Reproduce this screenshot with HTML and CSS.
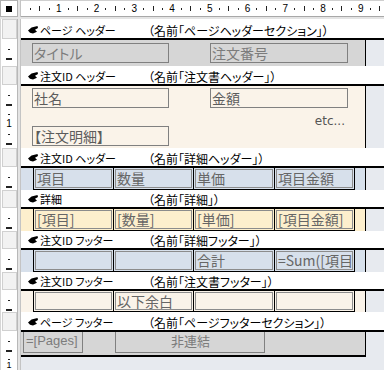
FILE: index.html
```html
<!DOCTYPE html>
<html lang="ja">
<head>
    <meta charset="UTF-8">
    <title>レポート デザイン ビュー</title>
    <link rel="stylesheet" href="styles.css">
</head>
<body>
    <!-- ルーラー -->
    <div class="row top">
        <div class="corner"><span class="corner-mark"></span></div>
        <div class="gap"></div>
        <div class="hruler">
            <i class="d"></i><i class="t"></i><i class="d"></i><i class="n">1</i>
            <i class="d"></i><i class="t"></i><i class="d"></i><i class="n">2</i>
            <i class="d"></i><i class="t"></i><i class="d"></i><i class="n">3</i>
            <i class="d"></i><i class="t"></i><i class="d"></i><i class="n">4</i>
            <i class="d"></i><i class="t"></i><i class="d"></i><i class="n">5</i>
            <i class="d"></i><i class="t"></i><i class="d"></i><i class="n">6</i>
            <i class="d"></i><i class="t"></i><i class="d"></i><i class="n">7</i>
            <i class="d"></i><i class="t"></i><i class="d"></i><i class="n">8</i>
            <i class="d"></i><i class="t"></i><i class="d"></i><i class="n">9</i>
            <i class="d"></i><i class="t"></i>
        </div>
    </div>
    <div class="strip"></div>

    <!-- ページ ヘッダー -->
    <div class="row bar-row h19">
        <div class="selcell"><span class="selbox"></span></div>
        <div class="gap"></div>
        <div class="bar">
            <svg class="bar-icon" width="10" height="8" viewBox="0 0 10 8"><path d="M0 4.5 L3.5 1.5 L9.5 0 L10 2 L7 3.8 L9 5.8 L5 7.5 L2 6.8 Z"/></svg>
            <span class="bar-label">ページ ヘッダー</span>
            <span class="bar-name">（名前「ページヘッダーセクション」）</span>
        </div>
    </div>
    <div class="row">
        <div class="vr"><i class="d"></i><i class="l"></i></div>
        <div class="gap"></div>
        <div class="sec sec-page h26">
            <div class="boxes">
                <div class="tb wide">タイトル</div>
                <div class="tb wide2">注文番号</div>
            </div>
        </div>
    </div>

    <!-- 注文書ヘッダー -->
    <div class="row bar-row h18">
        <div class="selcell"><span class="selbox"></span></div>
        <div class="gap"></div>
        <div class="bar">
            <svg class="bar-icon" width="10" height="8" viewBox="0 0 10 8"><path d="M0 4.5 L3.5 1.5 L9.5 0 L10 2 L7 3.8 L9 5.8 L5 7.5 L2 6.8 Z"/></svg>
            <span class="bar-label">注文ID ヘッダー</span>
            <span class="bar-name">（名前「注文書ヘッダー」）</span>
        </div>
    </div>
    <div class="row">
        <div class="vr"><i class="d"></i><i class="l"></i><i class="d"></i><i class="n">1</i><i class="d"></i><i class="l"></i></div>
        <div class="gap"></div>
        <div class="sec sec-order h62">
            <div class="boxes">
                <div class="tb wide dark">社名</div>
                <div class="tb wide2 dark">金額</div>
            </div>
            <div class="etc">etc...</div>
            <div class="boxes">
                <div class="tb wide dark">【注文明細】</div>
            </div>
        </div>
    </div>

    <!-- 詳細ヘッダー -->
    <div class="row bar-row h18">
        <div class="selcell"><span class="selbox"></span></div>
        <div class="gap"></div>
        <div class="bar">
            <svg class="bar-icon" width="10" height="8" viewBox="0 0 10 8"><path d="M0 4.5 L3.5 1.5 L9.5 0 L10 2 L7 3.8 L9 5.8 L5 7.5 L2 6.8 Z"/></svg>
            <span class="bar-label">注文ID ヘッダー</span>
            <span class="bar-name">（名前「詳細ヘッダー」）</span>
        </div>
    </div>
    <div class="row">
        <div class="vr"><i class="d"></i><i class="l"></i></div>
        <div class="gap"></div>
        <div class="sec sec-group h22">
            <div class="cells">
                <div class="cell"><span>項目</span></div>
                <div class="cell"><span>数量</span></div>
                <div class="cell"><span>単価</span></div>
                <div class="cell"><span>項目金額</span></div>
            </div>
        </div>
    </div>

    <!-- 詳細 -->
    <div class="row bar-row h17">
        <div class="selcell"><span class="selbox"></span></div>
        <div class="gap"></div>
        <div class="bar">
            <svg class="bar-icon" width="10" height="8" viewBox="0 0 10 8"><path d="M0 4.5 L3.5 1.5 L9.5 0 L10 2 L7 3.8 L9 5.8 L5 7.5 L2 6.8 Z"/></svg>
            <span class="bar-label">詳細</span>
            <span class="bar-name">（名前「詳細」）</span>
        </div>
    </div>
    <div class="row">
        <div class="vr"><i class="d"></i><i class="l"></i></div>
        <div class="gap"></div>
        <div class="sec sec-detail h22">
            <div class="cells">
                <div class="cell"><span>[項目]</span></div>
                <div class="cell"><span>[数量]</span></div>
                <div class="cell"><span>[単価]</span></div>
                <div class="cell"><span>[項目金額]</span></div>
            </div>
        </div>
    </div>

    <!-- 詳細フッター -->
    <div class="row bar-row h17">
        <div class="selcell"><span class="selbox"></span></div>
        <div class="gap"></div>
        <div class="bar">
            <svg class="bar-icon" width="10" height="8" viewBox="0 0 10 8"><path d="M0 4.5 L3.5 1.5 L9.5 0 L10 2 L7 3.8 L9 5.8 L5 7.5 L2 6.8 Z"/></svg>
            <span class="bar-label">注文ID フッター</span>
            <span class="bar-name">（名前「詳細フッター」）</span>
        </div>
    </div>
    <div class="row">
        <div class="vr"><i class="d"></i><i class="l"></i></div>
        <div class="gap"></div>
        <div class="sec sec-group h22">
            <div class="cells">
                <div class="cell"><span></span></div>
                <div class="cell"><span></span></div>
                <div class="cell"><span>合計</span></div>
                <div class="cell"><span>=Sum([項目</span></div>
            </div>
        </div>
    </div>

    <!-- 注文書フッター -->
    <div class="row bar-row h17">
        <div class="selcell"><span class="selbox"></span></div>
        <div class="gap"></div>
        <div class="bar">
            <svg class="bar-icon" width="10" height="8" viewBox="0 0 10 8"><path d="M0 4.5 L3.5 1.5 L9.5 0 L10 2 L7 3.8 L9 5.8 L5 7.5 L2 6.8 Z"/></svg>
            <span class="bar-label">注文ID フッター</span>
            <span class="bar-name">（名前「注文書フッター」）</span>
        </div>
    </div>
    <div class="row">
        <div class="vr"><i class="d"></i><i class="l"></i></div>
        <div class="gap"></div>
        <div class="sec sec-order h21">
            <div class="cells">
                <div class="cell"><span></span></div>
                <div class="cell"><span>以下余白</span></div>
                <div class="cell"><span></span></div>
                <div class="cell"><span></span></div>
            </div>
        </div>
    </div>

    <!-- ページ フッター -->
    <div class="row bar-row h18">
        <div class="selcell"><span class="selbox"></span></div>
        <div class="gap"></div>
        <div class="bar">
            <svg class="bar-icon" width="10" height="8" viewBox="0 0 10 8"><path d="M0 4.5 L3.5 1.5 L9.5 0 L10 2 L7 3.8 L9 5.8 L5 7.5 L2 6.8 Z"/></svg>
            <span class="bar-label">ページ フッター</span>
            <span class="bar-name">（名前「ページフッターセクション」）</span>
        </div>
    </div>
    <div class="row">
        <div class="vr"><i class="d"></i><i class="l"></i></div>
        <div class="gap"></div>
        <div class="sec sec-page sec-last h23">
            <div class="boxes foot">
                <div class="tb pages">=[Pages]</div>
                <div class="tb unbound">非連結</div>
            </div>
        </div>
    </div>
    <div class="row tail">
        <div class="vr vr-tail"><i class="d"></i><i class="n">1</i></div>
        <div class="gap"></div>
    </div>
</body>
</html>
```

FILE: styles.css
```css
/* Report design view */
* {
    box-sizing: border-box;
}

body {
    margin: 0;
    width: 384px;
    height: 370px;
    overflow: hidden;
    background: #e7eaef;
    font-family: "Noto Sans CJK JP", sans-serif;
    color: #000;
}

.row {
    display: grid;
    grid-template-columns: 18px 3px 345px 18px;
}

.gap {
    background: #e4e4e4;
    border-right: 1px solid #c4c4c4;
}

/* rulers */
.top {
    height: 17px;
}

.corner {
    background: #fff;
    border: 1px solid #b0b0b0;
    display: flex;
    align-items: center;
    justify-content: center;
}

.corner-mark {
    width: 6px;
    height: 6px;
    background: #000;
}

.hruler {
    grid-column: 3 / 5;
    background: #fff;
    border-top: 1px solid #cfcfcf;
    border-bottom: 1px solid #a8a8a8;
    display: flex;
    align-items: center;
    padding-left: 4.725px;
    overflow: hidden;
}

.hruler i {
    flex: 0 0 9.45px;
    display: flex;
    align-items: center;
    justify-content: center;
    font-style: normal;
}

.hruler .d::before,
.hruler .t::before,
.vr .d::before,
.vr .l::before {
    content: "";
    display: block;
    background: #222;
}

.hruler .d::before { width: 1px; height: 2px; }
.hruler .t::before { width: 1px; height: 5px; }

.hruler .n,
.vr .n {
    font-family: "Liberation Sans", sans-serif;
    font-size: 10px;
    line-height: 10px;
}

.strip {
    height: 2px;
    background: #e4e4e4;
}

/* the ruler column must not stretch its row */
.vr {
    contain: size;
    background: #fff;
    border-left: 1px solid #d6d6d6;
    border-right: 1px solid #b8b8b8;
    display: flex;
    flex-direction: column;
    align-items: center;
    padding-top: 4.75px;
    overflow: hidden;
}

.vr i {
    flex: 0 0 9.5px;
    display: flex;
    align-items: center;
    justify-content: center;
    font-style: normal;
}

.vr .d::before { width: 2px; height: 1px; }
.vr .l::before { width: 6px; height: 2px; }

.vr-tail {
    padding-top: 0;
}

.vr-tail .d {
    flex-basis: 4px;
}

.vr-tail .n {
    flex-basis: 8px;
    font-size: 9px;
    line-height: 8px;
}

/* section bars */
.selcell {
    contain: size;
    background: #fff;
    border-left: 1px solid #d6d6d6;
    border-right: 1px solid #b8b8b8;
    padding: 0 0 1px 1px;
}

.selbox {
    display: block;
    height: 100%;
    background: #f2f2f2;
    border: 1px solid #d0d0d0;
}

.bar {
    grid-column: 3 / 5;
    background: #fff;
    border-bottom: 2px solid #000;
    display: flex;
    align-items: flex-end;
    padding-left: 7px;
    line-height: 15px;
    font-feature-settings: "palt";
}

.bar-icon {
    flex: 0 0 10px;
    margin-right: 2px;
    margin-bottom: 4px;
}

.bar-label {
    flex: 0 0 108px;
    font-size: 11px;
}

.bar-name {
    font-size: 12px;
    white-space: nowrap;
}

.h17 { height: 19px; }
.h18 { height: 20px; }
.h19 { height: 21px; }

/* section bodies */
.sec {
    border-right: 1px solid #000;
}

.sec-page { background: #d6d6d6; }
.sec-order { background: #faf3e9; }
.sec-group { background: #d7e0eb; }
.sec-detail { background: #fdefcd; }

.sec-last {
    border-bottom: 2px solid #000;
}

.sec.h21 { height: 21px; }
.sec.h22 { height: 22px; }
.sec.h23 { height: 25px; }
.sec.h26 { height: 26px; padding-top: 3px; }
.sec.h62 { height: 62px; padding-top: 2px; }

.boxes {
    display: flex;
    padding-left: 11px;
    gap: 41px;
}

.tb {
    height: 20px;
    border: 1px solid #808080;
    color: #7c7c7c;
    font-size: 14px;
    line-height: 18px;
    padding-left: 1px;
    font-feature-settings: "palt";
    white-space: nowrap;
    overflow: hidden;
}

.tb.dark {
    color: #5c5c5c;
}

.wide { width: 137px; }
.wide2 { width: 138px; }

.etc {
    height: 18px;
    width: 324px;
    text-align: right;
    font-family: "DejaVu Sans", sans-serif;
    font-size: 12px;
    line-height: 26px;
    color: #555;
}

.cells {
    display: grid;
    grid-template-columns: 81px 80px 81px 80px;
    margin-left: 12px;
    height: 100%;
}

.cell {
    border-right: 1px solid #000;
    border-bottom: 1px solid #000;
    padding: 1px;
    overflow: hidden;
}

.cell:first-child {
    border-left: 1px solid #000;
}

.cell span {
    display: block;
    height: 100%;
    border: 1px solid #8c8c8c;
    color: #666;
    font-size: 14px;
    line-height: 17px;
    padding-left: 1px;
    white-space: nowrap;
    overflow: hidden;
}

.foot {
    gap: 32px;
    padding-left: 2px;
}

.foot .tb {
    height: 21px;
    border-top: none;
}

.pages {
    width: 60px;
    font-family: "Liberation Sans", sans-serif;
    font-size: 13px;
    padding-left: 2px;
}

.unbound {
    width: 150px;
    text-align: center;
    font-size: 13px;
}

.tail {
    height: 13px;
}
```
